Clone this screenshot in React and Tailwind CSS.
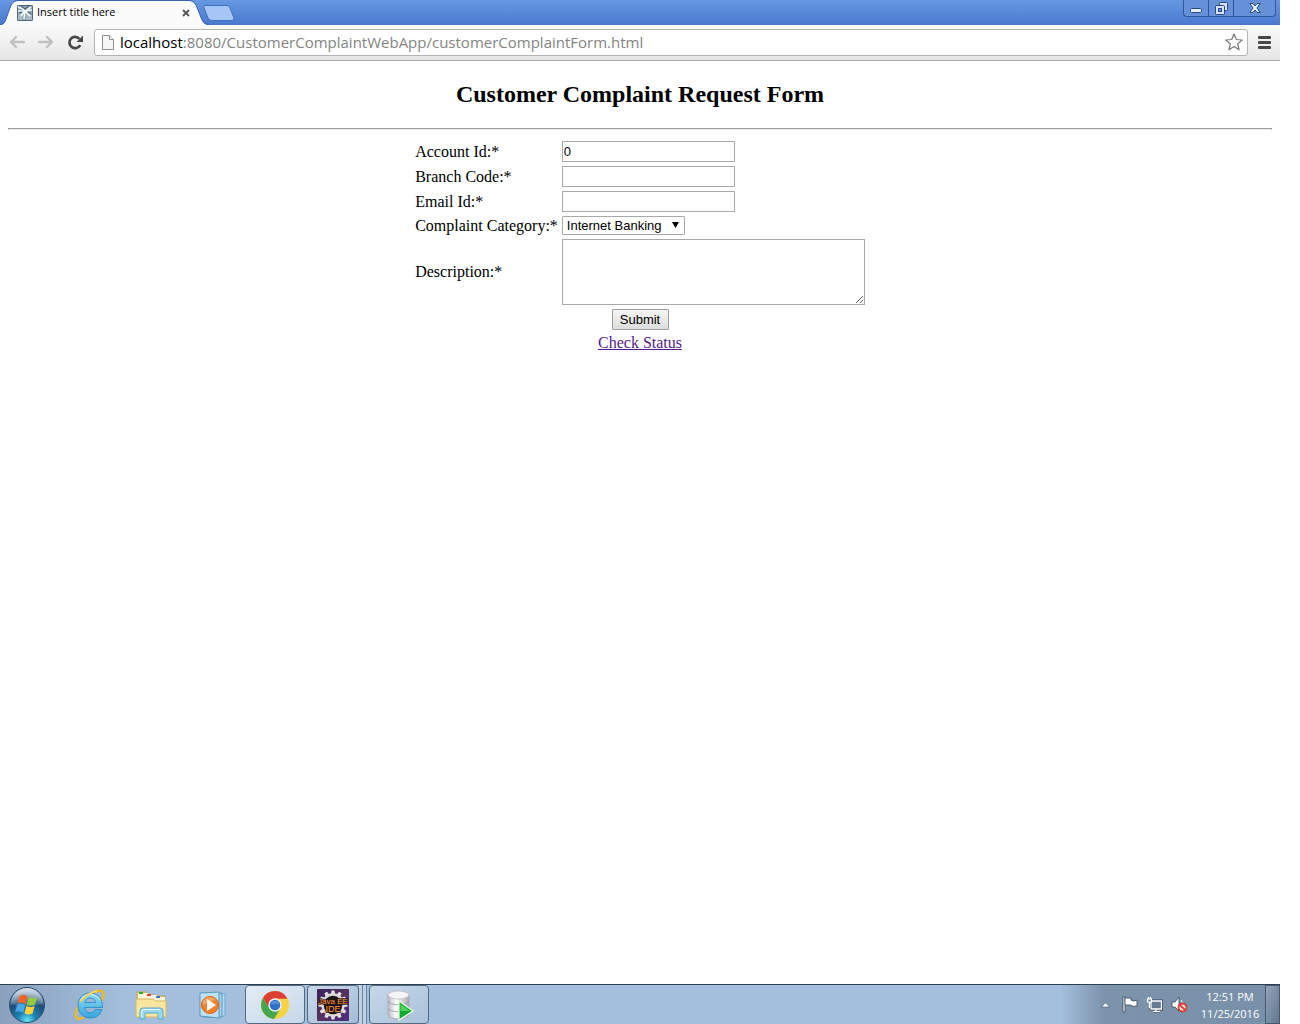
import React from "react";

const fields = [
  { id: "account", label: "Account Id:*", value: "0" },
  { id: "branch", label: "Branch Code:*", value: "" },
  { id: "email", label: "Email Id:*", value: "" },
];

function TabShape() {
  return (
    <svg className="absolute inset-0 h-full w-full" viewBox="0 0 210 25" preserveAspectRatio="none" aria-hidden="true">
      <path d="M0 25 C4 25 5 22 6 19 L11 5 Q13 1 17 1 H190 Q194 1 196 5 L202 20 Q204 25 209 25 Z" fill="#fbfbfb" />
      <path d="M0 24.500 C4 24.500 5 22 6 19 L11 5 Q13 1 17 .5 H190 Q194 1 196 5 L202 20 Q204 24.500 209 24.500" fill="none" stroke="#3963ad" />
    </svg>
  );
}

function Favicon() {
  return (
    <svg width="16" height="16" viewBox="0 0 16 16" aria-hidden="true">
      <rect width="16" height="16" rx="1" fill="#8ea4b1" />
      <path d="M1 9 L6 7 L5 15 H1Z M10 8 L15 10 V15 H9Z" fill="#a9bcc7" />
      <path d="M1 2 L6 4 L7 6 M14 2 L10 5 L8 6 M1 6 L7 6 L15 5" stroke="#eef4f7" strokeWidth="1.600" fill="none" />
      <path d="M8 6 L4 11 M8 6 L7 14 M8 6 L13 11" stroke="#f7fafb" strokeWidth="1.500" fill="none" />
      <path d="M4 1 L8 4 L12 1 M2 8 L5 7 M11 7 L14 9" fill="none" stroke="#3f5361" />
      <rect x=".5" y=".5" width="15" height="15" rx="1" fill="none" stroke="#536877" />
    </svg>
  );
}

function NavArrow({ back }) {
  return (
    <svg width="16" height="14" viewBox="0 0 16 14" fill="none" stroke="#c0c0c0" strokeWidth="2.400" strokeLinejoin="round" strokeLinecap="round" aria-hidden="true">
      {back ? <path d="M15 7 H2 M7 2 L2 7 L7 12" /> : <path d="M1 7 H14 M9 2 L14 7 L9 12" />}
    </svg>
  );
}

function TitleBar() {
  return (
    <div className="flex h-[25px] justify-between bg-linear-to-b from-[#6798e2] to-[#4978cf]">
      <div className="flex">
        <div className="relative h-[25px] w-[210px]">
          <TabShape />
          <div className="relative flex h-full items-center gap-1 pr-[18px] pl-[17px]">
            <Favicon />
            <span className="flex-1 whitespace-nowrap font-['Open_Sans',sans-serif] text-[11px] text-black">Insert title here</span>
            <button aria-label="Close tab" className="flex h-4 w-3 items-center justify-center">
              <svg width="8" height="8" viewBox="0 0 8 8" stroke="#555" strokeWidth="1.800"><path d="M1 1 L7 7 M7 1 L1 7" /></svg>
            </button>
          </div>
        </div>
        <button aria-label="New tab" className="-ml-2 h-[25px]">
          <svg width="33" height="25" viewBox="0 0 33 25">
            <path d="M3 5.500 H25 Q27 5.500 28 8 L32 18 Q32 20.500 30 20.500 H10 Q7 20.500 6 18 L2 8 Q1 6 3 5.500 Z" fill="#a5c6f7" stroke="#416fba" />
          </svg>
        </button>
      </div>
      <div className="mr-1 flex h-[17px] overflow-hidden rounded-b border border-t-0 border-[#2f559c] bg-[#6690d8]">
        <button aria-label="Minimize" className="flex w-[25px] items-center justify-center border-r border-[#2f559c]">
          <svg width="12" height="12" viewBox="0 0 12 12"><rect x=".5" y="6.500" width="11" height="4" rx="1" fill="#e4edfb" stroke="#2a4680" /></svg>
        </button>
        <button aria-label="Restore" className="flex w-[25px] items-center justify-center border-r border-[#2f559c]">
          <svg width="13" height="13" viewBox="0 0 13 13" fill="#d5e3fa" stroke="#2a4680">
            <rect x="4.500" y=".5" width="8" height="8" rx="1" />
            <rect x=".5" y="3.500" width="9" height="9" rx="1" />
            <rect x="3.500" y="6.500" width="3" height="3" fill="#6690d8" />
          </svg>
        </button>
        <button aria-label="Close window" className="flex w-[41px] items-center justify-center">
          <svg width="12" height="10" viewBox="0 0 12 10" fill="#e4edfb" stroke="#2a4680" strokeLinejoin="round">
            <path d="M.8 .6 H4 L6 3 L8 .6 H11.200 L8 5 L11.200 9.400 H8 L6 7 L4 9.400 H.8 L4 5 Z" />
          </svg>
        </button>
      </div>
    </div>
  );
}

function Toolbar() {
  return (
    <div className="flex h-9 items-center border-b border-[#a9a9a9] bg-linear-to-b from-[#fafafa] to-[#e6e6e6] pr-[9px] pb-px pl-[9px]">
      <button aria-label="Back" className="mr-[13px]"><NavArrow back /></button>
      <button aria-label="Forward" className="mr-[13px]"><NavArrow /></button>
      <button aria-label="Reload" className="mr-[10px]">
        <svg width="17" height="17" viewBox="0 0 17 17" aria-hidden="true">
          <path d="M13.200 11.200 A5.700 5.700 0 1 1 12.500 4.800" fill="none" stroke="#484848" strokeWidth="2.700" />
          <path d="M16 1.500 V8 H9.500 Z" fill="#484848" />
        </svg>
      </button>
      <div className="flex h-[27px] min-w-0 flex-1 items-center rounded-[3px] border border-[#b4b4b4] bg-white pr-1 pl-[7px]">
        <svg width="12" height="15" viewBox="0 0 12 15" fill="#f7f7f7" stroke="#8e8e8e" aria-hidden="true">
          <path d="M.5 .5 H7.500 L11.500 4.500 V14.500 H.5 Z" />
          <path d="M7.500 .5 V4.500 H11.500" />
        </svg>
        <div className="ml-[6px] flex-1 whitespace-nowrap font-['Open_Sans',sans-serif] text-[15px] leading-6 text-[#848484]">
          <span className="text-black">localhost</span>:8080/CustomerComplaintWebApp/customerComplaintForm.html
        </div>
        <button aria-label="Bookmark this page">
          <svg width="18" height="18" viewBox="0 0 18 18" fill="#fff" stroke="#777" strokeWidth="1.200" strokeLinejoin="round">
            <path d="M9 1 L11.300 6.500 L17.200 7 L12.700 10.900 L14.100 16.800 L9 13.600 L3.900 16.800 L5.300 10.900 L.8 7 L6.700 6.500 Z" />
          </svg>
        </button>
      </div>
      <button aria-label="Menu" className="ml-[10px]">
        <svg width="13" height="14" viewBox="0 0 13 14" fill="#484848"><rect y="1" width="13" height="3" rx="1" /><rect y="6" width="13" height="3" rx="1" /><rect y="11" width="13" height="3" rx="1" /></svg>
      </button>
    </div>
  );
}

function ComplaintForm() {
  return (
    <main className="flex-1 px-2 font-['Liberation_Serif',serif] text-[16px] leading-[18px] text-black">
      <h2 className="pt-5 text-center text-[24px] font-bold leading-[27px]">Customer Complaint Request Form</h2>
      <hr className="mt-5 mb-2 h-[2px] border border-[#9a9a9a] border-b-[#eeeeee]" />
      <form onSubmit={(e) => e.preventDefault()}>
        <table className="mx-auto border-separate border-spacing-[2px]">
          <tbody>
            {fields.map((f) => (
              <tr key={f.id}>
                <td className="p-px"><label htmlFor={f.id} className="block">{f.label}</label></td>
                <td className="p-px">
                  <input id={f.id} type="text" defaultValue={f.value} className="block h-[21px] w-[173px] border border-[#a9a9a9] bg-white px-px font-['Liberation_Sans',sans-serif] text-[13px]" />
                </td>
              </tr>
            ))}
            <tr>
              <td className="whitespace-nowrap p-px"><label htmlFor="category" className="block">Complaint Category:*</label></td>
              <td className="p-px">
                <div className="relative w-[123px]">
                  <select id="category" className="block h-[19px] w-full appearance-none rounded-[1px] border border-[#a9a9a9] bg-white pl-1 font-['Liberation_Sans',sans-serif] text-[13px] leading-4">
                    <option>Internet Banking</option>
                  </select>
                  <svg className="pointer-events-none absolute top-[6px] right-[6px]" width="7" height="6" viewBox="0 0 7 6" aria-hidden="true"><path d="M0 0 H7 L3.500 6 Z" /></svg>
                </div>
              </td>
            </tr>
            <tr>
              <td className="p-px"><label htmlFor="description" className="block">Description:*</label></td>
              <td className="p-px">
                <textarea id="description" className="block h-[66px] w-[303px] resize border border-[#a9a9a9] bg-white p-[2px] font-['Liberation_Mono',monospace] text-[13px]" />
              </td>
            </tr>
            <tr>
              <td colSpan={2} className="p-px text-center">
                <button type="submit" className="mx-auto block h-[21px] w-[57px] rounded-[1px] border border-[#a0a0a0] bg-linear-to-b from-[#f6f6f6] to-[#dddddd] font-['Liberation_Sans',sans-serif] text-[13px] leading-[19px]">Submit</button>
              </td>
            </tr>
            <tr>
              <td colSpan={2} className="p-px text-center"><a href="#status" className="text-[#551a8b] underline">Check Status</a></td>
            </tr>
          </tbody>
        </table>
      </form>
    </main>
  );
}

function StartOrb() {
  return (
    <svg width="38" height="38" viewBox="0 0 38 38" aria-hidden="true">
      <defs>
        <radialGradient id="orb" cx=".5" cy=".95" r=".85">
          <stop offset="0" stopColor="#6ce8fa" /><stop offset=".3" stopColor="#1d86b6" /><stop offset=".7" stopColor="#1f4b75" /><stop offset="1" stopColor="#7f9db8" />
        </radialGradient>
        <linearGradient id="orbShine" x1="0" y1="0" x2="0" y2="1"><stop offset="0" stopColor="#fff" stopOpacity=".65" /><stop offset="1" stopColor="#fff" stopOpacity=".12" /></linearGradient>
      </defs>
      <circle cx="19" cy="19" r="17.500" fill="url(#orb)" stroke="#294d6d" />
      <path d="M3 18 A16 16 0 0 1 35 18 Q19 22 3 18Z" fill="url(#orbShine)" />
      <path d="M11.500 10 Q15.500 7.500 19.500 10.300 L17.500 18 Q13.500 15.500 9.500 17.300Z" fill="#f0632a" />
      <path d="M20.700 11 Q24.700 13.300 29 11 L27 18.500 Q22.500 21 18.700 18.500Z" fill="#93cb3c" />
      <path d="M9.200 18.700 Q13.200 16.700 17.200 19.300 L15.300 26.700 Q11.500 24 7.200 26Z" fill="#45a9e8" />
      <path d="M18.400 19.800 Q22.300 22.200 26.600 20 L24.600 27.500 Q20.500 29.600 16.500 27.200Z" fill="#ffd23c" />
    </svg>
  );
}

function ExplorerIcon() {
  return (
    <svg width="34" height="34" viewBox="0 0 34 34" aria-hidden="true">
      <defs>
        <linearGradient id="ieBlue" x1="0" y1="0" x2="0" y2="1"><stop offset="0" stopColor="#8edcf7" /><stop offset="1" stopColor="#35a5de" /></linearGradient>
      </defs>
      <path d="M30 12 C33 5 31 1 25 3 C16 6 6 16 4 24 C2.500 30 6 33 12 29" fill="none" stroke="#e9b92e" strokeWidth="2.600" strokeLinecap="round" />
      <path d="M18 5 C10.500 5 6 10.500 6 17.500 C6 25 11 30 18.500 30 C24.500 30 28.500 26.500 30 21.500 H23 C22 23.800 20.800 24.800 18.300 24.800 C15 24.800 13 22.700 12.800 19.500 H30.500 C31 10.500 25.500 5 18 5Z M13 14.500 C13.500 11.800 15.300 10 18.200 10 C21.500 10 23.200 11.800 23.500 14.500Z" fill="url(#ieBlue)" stroke="#2585c2" strokeWidth=".8" fillRule="evenodd" />
      <path d="M8.500 13 C10.500 8.500 14 6.500 18 6.500 C22 6.500 26 8.500 28 12" fill="none" stroke="#d3f4ff" />
      <path d="M8 14 C13 7.500 19 4.500 25 3" fill="none" stroke="#f0c53c" strokeWidth="2.200" />
      <path d="M8 13.500 C13 7 19 4.500 25 3" fill="none" stroke="#ffef94" strokeWidth=".8" />
    </svg>
  );
}

function FolderIcon() {
  return (
    <svg width="34" height="34" viewBox="0 0 34 34" aria-hidden="true">
      <path d="M3 4 H12 L14 7 H22 L23 8 H31 V28 H3Z" fill="#efd382" stroke="#c5a253" />
      <path d="M4 5 H14 V12 H4Z" fill="#fff7d6" /><path d="M13 7 H23 V14 H13Z" fill="#fffbe8" /><path d="M21 9 H31 V15 H21Z" fill="#fff7d6" />
      <rect x="5" y="4" width="4" height="2" fill="#31a939" /><rect x="13" y="6" width="4" height="2" fill="#d84a36" /><rect x="22" y="8" width="4" height="2" fill="#3279ce" />
      <path d="M2 11 H19 L22 13 H32 V29 H2Z" fill="#f8e69e" stroke="#d6b660" />
      <path d="M6 31 V23 Q6 20 9 20 H26 Q29 20 29 23 V31 H24 V25 H11 V31Z" fill="#9bd9ef" stroke="#5aa9c9" />
      <path d="M7.500 29 V23 Q8 21.500 10 21.500 H26" fill="none" stroke="#e5faff" />
    </svg>
  );
}

function MediaIcon() {
  return (
    <svg width="32" height="32" viewBox="0 0 32 32" aria-hidden="true">
      <path d="M9 5 H28 V27 L9 28Z" fill="#b5d8ef" stroke="#70a9cf" />
      <path d="M6 4 H25 V28 H6Z" fill="#a5cfe9" stroke="#5a98c3" />
      <path d="M3 4 L22 3 V29 L3 27Z" fill="#bfe1f4" stroke="#5797c2" />
      <circle cx="13" cy="16" r="8.500" fill="#f28127" stroke="#d85e16" />
      <path d="M6 12 A8 8 0 0 1 19 11 Q12 12 6 16Z" fill="#ffb777" opacity=".7" />
      <path d="M10 10 L19 16 L10 22Z" fill="#fff" />
    </svg>
  );
}

function ChromeIcon() {
  return (
    <svg width="30" height="30" viewBox="0 0 30 30" aria-hidden="true">
      <circle cx="15" cy="15" r="14" fill="#f7d344" />
      <path d="M2.900 8 A14 14 0 0 0 14 29 L20.600 18.300 L15 15 L9.400 18Z" fill="#46a84c" />
      <path d="M2.900 8 A14 14 0 0 1 27.400 8.700 H15 V15 L9.400 18.500Z" fill="#dc4034" />
      <circle cx="15" cy="15" r="6.700" fill="#f2f5f8" /><circle cx="15" cy="15" r="5.300" fill="#2f74c9" />
      <path d="M10.500 14 A4.700 4.700 0 0 1 19.500 14Z" fill="#77aceb" opacity=".5" />
    </svg>
  );
}

const teeth = [0, 30, 60, 90, 120, 150, 180, 210, 240, 270, 300, 330];

function JavaIcon() {
  return (
    <svg width="32" height="32" viewBox="0 0 32 32" aria-hidden="true">
      <defs><linearGradient id="javaBg" x1="0" y1="0" x2="1" y2="1"><stop offset="0" stopColor="#39225c" /><stop offset=".5" stopColor="#56305f" /><stop offset="1" stopColor="#4b2c80" /></linearGradient></defs>
      <rect width="32" height="32" rx="1" fill="url(#javaBg)" />
      {teeth.map((angle) => (
        <path key={angle} d="M14 5 L14.500 1.500 H17.500 L18 5Z" fill="#e6e3e3" transform={`rotate(${angle} 16 16)`} />
      ))}
      <circle cx="16" cy="16" r="10.500" fill="#1a1519" stroke="#dcd8d8" strokeWidth="2.400" />
      <g fill="#ff9a35" stroke="#2b1414" strokeWidth="1.500" paintOrder="stroke" fontFamily="Liberation Sans" textAnchor="middle">
        <text x="16" y="15" fontSize="8">Java EE</text>
        <text x="16" y="23" fontSize="9">IDE</text>
      </g>
    </svg>
  );
}

function DatabaseIcon() {
  return (
    <svg width="32" height="32" viewBox="0 0 32 32" aria-hidden="true">
      <defs><linearGradient id="db" x1="0" x2="1"><stop offset="0" stopColor="#bbbac5" /><stop offset=".4" stopColor="#fff" /><stop offset="1" stopColor="#a9a8b4" /></linearGradient></defs>
      <path d="M5 6 V26 C5 31 26 31 26 26 V6Z" fill="url(#db)" stroke="#a5a4ae" strokeWidth=".7" />
      <ellipse cx="15.500" cy="6" rx="10.500" ry="4" fill="#f5f5f8" stroke="#b5b4bf" strokeWidth=".7" />
      <path d="M5 12 C5 17 26 17 26 12 M5 19 C5 24 26 24 26 19" fill="none" stroke="#9a98a6" strokeWidth=".8" />
      <path d="M16 12 L30 22 L16 31Z" fill="#15a92d" stroke="#e6ffe5" strokeWidth="1.200" />
      <path d="M17.500 15 L27 22 L17.500 22Z" fill="#6be36e" opacity=".7" />
    </svg>
  );
}

function Taskbar() {
  return (
    <footer className="flex h-10 border-t border-[#2e3f50] bg-linear-to-r from-[#8aa1be] via-[#a4bfde] via-10% to-[#a4bfde]">
      <button aria-label="Start" className="ml-2 flex w-[38px] items-center justify-center"><StartOrb /></button>
      <button aria-label="Internet Explorer" className="ml-[13px] flex w-[60px] items-center justify-center"><ExplorerIcon /></button>
      <button aria-label="Windows Explorer" className="ml-[2px] flex w-[60px] items-center justify-center"><FolderIcon /></button>
      <button aria-label="Media Player" className="ml-[2px] flex w-[60px] items-center justify-center"><MediaIcon /></button>
      <button aria-label="Chrome" className="ml-[2px] flex w-[60px] items-center justify-center rounded-sm border border-[#536980] bg-linear-to-br from-[#e3ecf5] to-[#c6d7e9]"><ChromeIcon /></button>
      <div className="ml-[2px] flex w-[60px]">
        <button aria-label="Java EE IDE" className="flex w-[52px] items-center justify-center rounded-sm border border-[#536980] bg-linear-to-br from-[#c9d9ea] to-[#a4bcd6]"><JavaIcon /></button>
        <div className="w-1 border-r border-[#6d849e] bg-[#bed0e4]" />
        <div className="w-1 border-r border-[#6d849e] bg-[#bed0e4]" />
      </div>
      <button aria-label="SQL Developer" className="ml-[2px] flex w-[60px] items-center justify-center rounded-sm border border-[#536980] bg-linear-to-br from-[#c6d7e9] to-[#abc2db]"><DatabaseIcon /></button>
      <div className="ml-auto flex w-[220px] items-center justify-end bg-linear-to-r from-[#a4bfde] via-[#7d93ac] via-20% to-[#7890a9]">
        <div className="flex items-center gap-2">
          <button aria-label="Show hidden icons" className="mr-1"><svg width="9" height="6" viewBox="0 0 9 6"><path d="M.5 5 L4.500 .8 L8.500 5Z" fill="#fff" stroke="#43556a" strokeWidth=".6" /></svg></button>
          <svg width="16" height="17" viewBox="0 0 16 17" role="img" aria-label="Action center" fill="#fff" stroke="#34445a" strokeWidth=".8">
            <path d="M1 1 H3 V16 H1Z" /><path d="M3 2 H9 V4 Q12 6 15 4 V10 Q11 11 8 9 H3Z" />
          </svg>
          <svg width="17" height="17" viewBox="0 0 17 17" role="img" aria-label="Network" fill="none">
            <path d="M5 5 H15.500 V13 H5Z M10 13 V15 M7 15.500 H14" stroke="#34445a" strokeWidth="3" />
            <path d="M5 5 H15.500 V13 H5Z M10 13 V15 M7 15.500 H14" fill="#667b93" stroke="#fff" strokeWidth="1.300" />
            <path d="M1.500 3 H5.500 V6 H1.500Z M2.500 1 V3 M4.500 1 V3 M3.500 6 V12" fill="#71869f" stroke="#fff" strokeWidth="1.200" />
          </svg>
          <svg width="17" height="17" viewBox="0 0 17 17" role="img" aria-label="Muted">
            <path d="M1 6 H4 L8 1 V15 L4 11 H1Z" fill="#fff" stroke="#34445a" strokeWidth=".8" />
            <path d="M10 4 Q12 6 11 8" fill="none" stroke="#fff" />
            <circle cx="11.500" cy="11.500" r="4" fill="#f6dcd9" stroke="#d73b32" strokeWidth="1.800" /><path d="M8.800 8.800 L14.200 14.200" stroke="#d73b32" strokeWidth="1.800" />
          </svg>
        </div>
        <div className="ml-3 w-[60px] whitespace-nowrap text-center font-['Open_Sans',sans-serif] text-[11px] leading-[17px] text-white">
          <div>12:51 PM</div><div>11/25/2016</div>
        </div>
        <button aria-label="Show desktop" className="ml-[5px] h-full w-[15px] border border-[#45586e] bg-linear-to-br from-[#91a5ba] to-[#61788f]" />
      </div>
    </footer>
  );
}

export default function App() {
  return (
    <div className="min-h-screen bg-white pr-5">
      <div className="flex min-h-screen flex-col">
        <TitleBar />
        <Toolbar />
        <ComplaintForm />
        <Taskbar />
      </div>
    </div>
  );
}
